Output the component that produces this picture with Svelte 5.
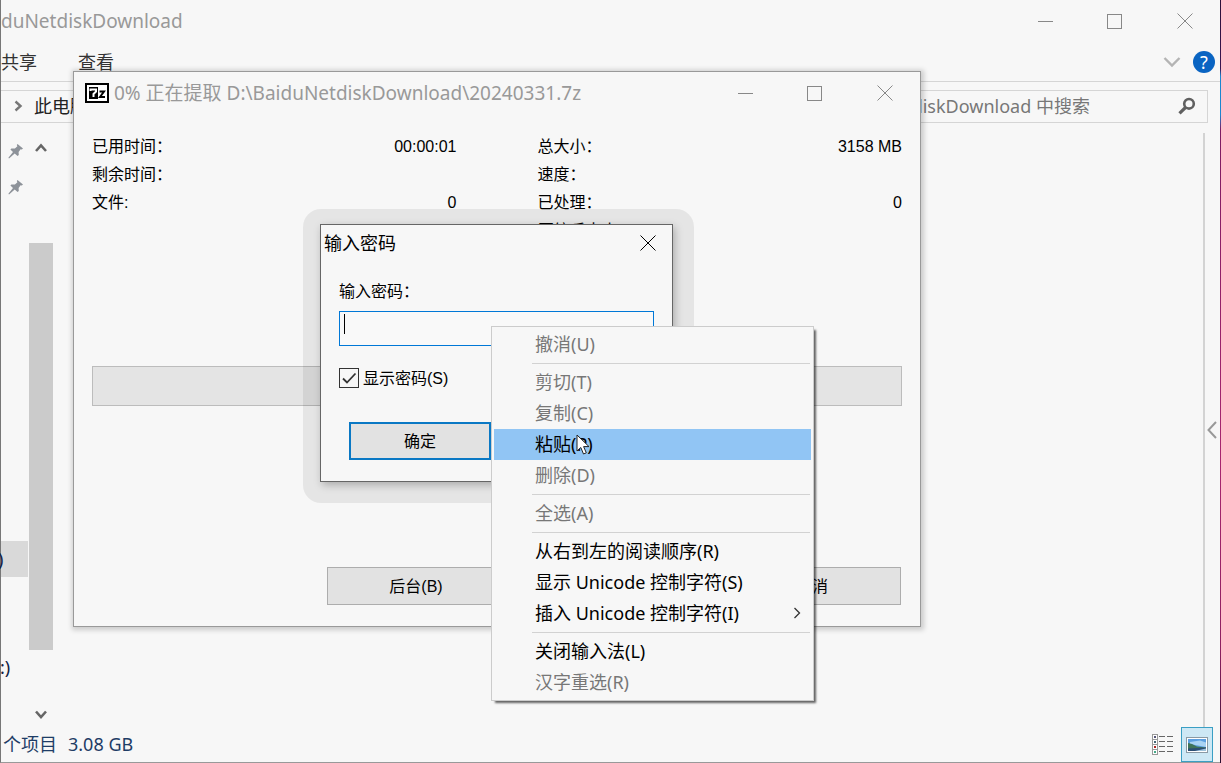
<script lang="ts">
  type MenuItem = { label: string; enabled?: boolean; submenu?: boolean; active?: boolean };

  const menuGroups: MenuItem[][] = [
    [{ label: '撤消(U)' }],
    [
      { label: '剪切(T)' },
      { label: '复制(C)' },
      { label: '粘贴(P)', enabled: true, active: true },
      { label: '删除(D)' },
    ],
    [{ label: '全选(A)' }],
    [
      { label: '从右到左的阅读顺序(R)', enabled: true },
      { label: '显示 Unicode 控制字符(S)', enabled: true },
      { label: '插入 Unicode 控制字符(I)', enabled: true, submenu: true },
    ],
    [{ label: '关闭输入法(L)', enabled: true }, { label: '汉字重选(R)' }],
  ];

  const leftStats = [
    { label: '已用时间：', value: '00:00:01' },
    { label: '剩余时间：', value: '' },
    { label: '文件:', value: '0' },
  ];

  const rightStats = [
    { label: '总大小：', value: '3158 MB' },
    { label: '速度：', value: '' },
    { label: '已处理：', value: '0' },
    { label: '压缩后大小：', value: '' },
  ];

  let password = $state('');
  let showPassword = $state(true);
</script>

{#snippet closeIcon()}
  <svg width="16" height="16" viewBox="0 0 16 16">
    <path d="M0.5 0.5 15.5 15.5M15.5 0.5 0.5 15.5" fill="none" stroke="currentColor" />
  </svg>
{/snippet}

{#snippet windowControls()}
  <div class="controls">
    <button aria-label="最小化">
      <svg width="16" height="16" viewBox="0 0 16 16"><path d="M1 8.5H16" stroke="currentColor" /></svg>
    </button>
    <button aria-label="最大化">
      <svg width="16" height="16" viewBox="0 0 16 16">
        <rect x="0.5" y="1.5" width="14" height="14" fill="none" stroke="currentColor" />
      </svg>
    </button>
    <button aria-label="关闭">{@render closeIcon()}</button>
  </div>
{/snippet}

{#snippet pin()}
  <svg width="16" height="16" viewBox="0 0 16 16">
    <path d="M9.5 1 15 5.5 13.8 6.6 12.6 6.3 10.6 8.9 10.8 12 9.6 13 6.7 10.4 1 15.4 0.4 14.8 5 8.9 2.4 6.6 3.4 5.4 6.9 5.4 9.4 3.2 8.8 2Z" fill="#8d9299" />
  </svg>
{/snippet}

<div class="desktop">
  <main class="explorer">
    <header class="title-bar">
      <span class="title">duNetdiskDownload</span>
      {@render windowControls()}
    </header>

    <nav class="ribbon">
      <button>共享</button>
      <button>查看</button>
      <span class="spacer"></span>
      <button class="expand" aria-label="展开功能区">
        <svg width="18" height="12" viewBox="0 0 18 12">
          <path d="M1.5 2 9 9.5 16.5 2" fill="none" stroke="#b4b4b4" stroke-width="2.4" />
        </svg>
      </button>
      <button class="help" aria-label="帮助">?</button>
    </nav>

    <div class="address-row">
      <div class="address">
        <svg width="9" height="12" viewBox="0 0 9 12">
          <path d="M1.5 1.5 6.5 6 1.5 10.5" fill="none" stroke="#777" stroke-width="2.4" />
        </svg>
        <span>此电脑</span>
      </div>
      <div class="search">
        <input type="text" placeholder="在 BaiduNetdiskDownload 中搜索" aria-label="搜索" />
        <svg width="18" height="18" viewBox="0 0 18 18">
          <circle cx="11" cy="6.8" r="4.8" fill="none" stroke="#606060" stroke-width="2.6" />
          <path d="M7.5 10.5 1.5 16.3" stroke="#606060" stroke-width="3.2" />
        </svg>
      </div>
    </div>

    <div class="content">
      <div class="tree">
        <div class="tree-row pinned">{@render pin()}</div>
        <div class="tree-row pinned">{@render pin()}</div>
        <span class="spacer"></span>
        <div class="tree-row selected">)</div>
        <div class="tree-row drive">:)</div>
      </div>
      <div class="scrollbar">
        <svg width="14" height="10" viewBox="0 0 14 10">
          <path d="M2 8 7 2.5 12 8" fill="none" stroke="#666" stroke-width="2.6" />
        </svg>
        <div class="thumb"></div>
        <svg width="14" height="10" viewBox="0 0 14 10">
          <path d="M2 1.5 7 7 12 1.5" fill="none" stroke="#666" stroke-width="2.6" />
        </svg>
      </div>
      <div class="files"></div>
      <button class="pane-toggle" aria-label="预览窗格">
        <svg width="10" height="18" viewBox="0 0 10 18">
          <path d="M9 1 1.5 9 9 17" fill="none" stroke="#999" stroke-width="2" />
        </svg>
      </button>
    </div>

    <footer class="status">
      <span>个项目</span>
      <span>3.08 GB</span>
      <span class="spacer"></span>
      <button aria-label="详细信息">
        <svg width="22" height="22" viewBox="0 0 22 22">
          <g fill="#fff" stroke="#999">
            <rect x="0.5" y="0.5" width="5" height="5" />
            <rect x="0.5" y="5.5" width="5" height="5" />
            <rect x="0.5" y="10.5" width="5" height="5" />
            <rect x="0.5" y="15.5" width="5" height="5" />
          </g>
          <rect x="2" y="2" width="2" height="2" fill="#557" />
          <rect x="2" y="7" width="2" height="2" fill="#467" />
          <rect x="2" y="12" width="2" height="2" fill="#a22" />
          <rect x="2" y="17" width="2" height="2" fill="#4a8" />
          <path d="M7 2.5h6M15 2.5h6M7 7.5h6M15 7.5h6M7 12.5h6M15 12.5h6M7 17.5h6M15 17.5h6" stroke="#666" />
        </svg>
      </button>
      <button class="current" aria-label="大缩略图">
        <svg width="22" height="16" viewBox="0 0 22 16">
          <rect x="0.5" y="0.5" width="21" height="15" fill="#fff" stroke="#8a9aa5" />
          <rect x="2" y="2" width="18" height="12" fill="#5b9fe0" />
          <path d="M4 5 14 3.5 20 5.5V10L4 7Z" fill="#a9d3f3" />
          <path d="M2 6 6 7 11 9.5 20 10.5V12H2Z" fill="#3f7358" />
          <path d="M2 11.5 20 10.5V14H2Z" fill="#2c4f74" />
          <path d="M9 14 20 11.5V14Z" fill="#9fc3dc" />
        </svg>
      </button>
    </footer>
  </main>

  <section class="progress-window">
    <header class="title-bar">
      <svg class="app-icon" width="24" height="20" viewBox="0 0 24 20">
        <rect x="1" y="1" width="22" height="18" fill="#fff" stroke="#000" stroke-width="2" />
        <rect x="4" y="4" width="9" height="12" fill="#000" />
        <path d="M5.5 8V6.5H11V8.5L8.5 11V14" fill="none" stroke="#fff" stroke-width="2" />
        <path d="M14.5 8.5H19L15 14H20" fill="none" stroke="#000" stroke-width="2" />
      </svg>
      <span class="title">0% 正在提取 D:\BaiduNetdiskDownload\20240331.7z</span>
      {@render windowControls()}
    </header>

    <div class="progress-body">
      <div class="stats">
        {#each [leftStats, rightStats] as column}
          <dl>
            {#each column as stat}
              <div class="stat">
                <dt>{stat.label}</dt>
                <dd>{stat.value}</dd>
              </div>
            {/each}
          </dl>
        {/each}
      </div>

      <div class="bar" role="progressbar" aria-label="进度" aria-valuenow="0"></div>

      <div class="actions">
        <button>后台(B)</button>
        <button aria-label="暂停"></button>
        <button>取消</button>
      </div>
    </div>
  </section>

  <!-- the outer element is the wide soft halo around the active dialog -->
  <div class="halo">
    <section class="password-window">
      <header>
        <span>输入密码</span>
        <button aria-label="关闭">{@render closeIcon()}</button>
      </header>
      <form>
        <label for="password">输入密码：</label>
        <div class="field">
          <input id="password" type="text" bind:value={password} />
          <span class="caret"></span>
        </div>
        <label class="check">
          <input type="checkbox" bind:checked={showPassword} />
          <span>显示密码(S)</span>
        </label>
        <div class="buttons">
          <button type="button" class="default">确定</button>
          <button type="button" aria-label="取消"></button>
        </div>
      </form>
    </section>
  </div>

  <div class="menu" role="menu">
    {#each menuGroups as group, i}
      {#if i > 0}
        <hr />
      {/if}
      {#each group as item}
        <button role="menuitem" class:active={item.active} disabled={!item.enabled}>
          <span>{item.label}</span>
          {#if item.submenu}
            <svg width="8" height="12" viewBox="0 0 8 12">
              <path d="M1.5 1 6.5 6 1.5 11" fill="none" stroke="#333" stroke-width="1.3" />
            </svg>
          {/if}
          {#if item.active}
            <svg class="pointer" width="15" height="22" viewBox="0 0 15 22">
              <path d="M1 1V17L4.8 13.5 7.5 20 10.3 18.8 7.6 12.6H13Z" fill="#fff" stroke="#222" />
            </svg>
          {/if}
        </button>
      {/each}
    {/each}
  </div>
</div>

<style>
  :global(body) {
    margin: 0;
    overflow: hidden;
  }

  .desktop {
    position: relative;
    height: 100vh;
    box-sizing: border-box;
    padding-right: 1px;
    background: linear-gradient(#2b1038, #3a1450 9%, #1c86cf 10%, #1c86cf 15%, #7d1c62 17%, #a8256f 60%, #8d2060 85%, #2b1030);
    font-family: 'Noto Sans', 'Noto Sans CJK SC', sans-serif;
    font-size: 18px;
    line-height: 24px;
    color: #222;
  }

  .desktop * {
    box-sizing: border-box;
  }

  button {
    margin: 0;
    padding: 0;
    border: 0;
    background: none;
    font: inherit;
    color: inherit;
  }

  svg {
    display: block;
    flex: none;
  }

  .spacer {
    flex: 1;
  }

  .explorer {
    display: flex;
    flex-direction: column;
    height: 100%;
    background: #f7f7f7;
    border-left: 1px solid #777;
    border-bottom: 1px solid #999;
  }

  .title-bar {
    display: flex;
    align-items: center;
    height: 44px;
    padding-bottom: 2px;
    color: #999;
  }

  .title {
    flex: 1;
    font-size: 19px;
    white-space: nowrap;
  }

  .controls {
    display: flex;
    height: 100%;
  }

  .controls button {
    display: flex;
    align-items: center;
    justify-content: center;
    width: 70px;
    color: #888;
  }

  .ribbon {
    display: flex;
    align-items: center;
    height: 38px;
    padding: 0 5px 2px 0;
    border-bottom: 1px solid #d5d5d5;
  }

  .ribbon button {
    margin-right: 41px;
    color: #333;
  }

  .ribbon .expand {
    margin-right: 12px;
  }

  .ribbon .help {
    width: 22px;
    height: 22px;
    margin: 0;
    border-radius: 50%;
    background: #0a64c2;
    color: #fff;
    line-height: 22px;
  }

  .address-row {
    display: flex;
    justify-content: space-between;
    margin: 8px 12px 0 0;
  }

  .address,
  .search {
    display: flex;
    align-items: center;
    height: 33px;
    padding-bottom: 2px;
    border: 1px solid #d5d5d5;
  }

  .address {
    flex: 1;
    gap: 11px;
    margin-right: 12px;
    padding-left: 13px;
    border-left: 0;
  }

  .search {
    width: 430px;
    padding-left: 10px;
    padding-right: 11px;
  }

  .search input {
    flex: 1;
    min-width: 0;
    padding: 0 0 0 21px;
    border: 0;
    outline: 0;
    background: none;
    font: inherit;
  }

  .search input::placeholder {
    color: #777;
    opacity: 1;
  }

  .content {
    display: flex;
    flex: 1;
    min-height: 0;
  }

  .tree {
    display: flex;
    flex-direction: column;
    width: 27px;
    padding: 10px 0 42px;
  }

  .tree-row {
    display: flex;
    align-items: center;
    height: 36px;
    color: #124;
  }

  .pinned {
    padding-left: 7px;
  }

  .selected {
    margin-bottom: 72px;
    background: #d9d9d9;
    text-indent: -3px;
  }

  .drive {
    text-indent: -1px;
  }

  .scrollbar {
    display: flex;
    flex-direction: column;
    align-items: center;
    gap: 60px;
    width: 24px;
    margin-left: 1px;
    padding: 20px 0 7px;
  }

  .thumb {
    flex: 1;
    width: 100%;
    margin-top: 30px;
    background: #cbcbcb;
  }

  .files {
    flex: 1;
    margin-top: 10px;
    border-right: 2px solid #d3d3d3;
  }

  .pane-toggle {
    width: 15px;
    padding: 10px 0 0 2px;
  }

  .status {
    display: flex;
    align-items: center;
    height: 35px;
    padding: 0 7px 0 2px;
    color: #1e3d66;
  }

  .status span {
    padding-bottom: 2px;
  }

  .status span + span {
    margin-left: 11px;
  }

  .status button {
    display: flex;
    align-items: center;
    justify-content: center;
    width: 32px;
    height: 100%;
  }

  .status .current {
    margin-left: 2px;
    border: 1px solid #3a9fc4;
    background: #cde8f5;
  }

  .progress-window {
    position: absolute;
    top: 71px;
    left: 73px;
    width: 848px;
    border: 1px solid #999;
    background: #f7f7f7;
    box-shadow: 1px 1px 5px 2px rgba(0, 0, 0, 0.18);
  }

  .app-icon {
    margin: 0 5px 0 11px;
  }

  .progress-body {
    padding: 17px 18px 21px;
    font-family: 'Liberation Sans', 'Noto Sans CJK SC', sans-serif;
    font-size: 16px;
    color: #000;
  }

  .stats {
    display: grid;
    grid-template-columns: 1fr 1fr;
    gap: 81px;
  }

  dl,
  dd {
    margin: 0;
  }

  .stat {
    display: flex;
    justify-content: space-between;
    height: 28px;
    line-height: 28px;
  }

  .bar {
    height: 40px;
    margin-top: 121px;
    border: 1px solid #bcbcbc;
    background: #e4e4e4;
  }

  .actions {
    display: flex;
    justify-content: flex-end;
    gap: 20px;
    margin: 161px 1px 0 0;
  }

  .actions button {
    width: 178px;
    height: 38px;
    padding-top: 2px;
    border: 1px solid #adadad;
    background: #e2e2e2;
  }

  .halo {
    position: absolute;
    top: 209px;
    left: 303px;
    width: 391px;
    padding: 15px 21px 21px 17px;
    border-radius: 18px;
    background: rgba(0, 0, 0, 0.07);
  }

  .password-window {
    border: 1px solid #666;
    background: #f7f7f7;
    color: #000;
    box-shadow: 2px 3px 8px rgba(0, 0, 0, 0.25);
  }

  .password-window header {
    display: flex;
    align-items: center;
    justify-content: space-between;
    height: 36px;
    padding: 0 16px 1px 3px;
  }

  form {
    display: flex;
    flex-direction: column;
    padding: 19px 18px 21px;
    font-family: 'Liberation Sans', 'Noto Sans CJK SC', sans-serif;
    font-size: 16px;
  }

  .field {
    position: relative;
    height: 35px;
    margin-top: 7px;
    border: 1px solid #0078d7;
    background: #f9f9f9;
  }

  .field input {
    display: block;
    width: 100%;
    height: 100%;
    padding: 0 4px;
    border: 0;
    outline: 0;
    background: none;
    font: inherit;
  }

  .caret {
    position: absolute;
    top: 2px;
    left: 4px;
    width: 1px;
    height: 20px;
    background: #000;
  }

  .check {
    display: flex;
    align-items: center;
    gap: 4px;
    margin-top: 20px;
  }

  .check span {
    padding-top: 2px;
    line-height: 22px;
  }

  .check input {
    appearance: none;
    width: 20px;
    height: 20px;
    margin: 0;
    border: 1px solid #333;
  }

  .check input:checked {
    background: url("data:image/svg+xml,%3Csvg xmlns='http://www.w3.org/2000/svg' viewBox='0 0 18 18'%3E%3Cpath d='M3 9.5l4 4 8.5-9' fill='none' stroke='%23333' stroke-width='1.8'/%3E%3C/svg%3E");
  }

  .buttons {
    display: flex;
    gap: 11px;
    margin: 32px 0 0 10px;
  }

  .buttons button {
    width: 142px;
    height: 38px;
    padding-top: 2px;
    border: 1px solid #adadad;
    background: #e2e2e2;
  }

  .buttons .default {
    border: 2px solid #0a78c4;
  }

  .menu {
    position: absolute;
    top: 326px;
    left: 491px;
    display: flex;
    flex-direction: column;
    width: 323px;
    padding: 2px;
    border: 1px solid #ccc;
    background: #f7f7f7;
    box-shadow: 3px 3px 2px -1px rgba(0, 0, 0, 0.6);
  }

  .menu button {
    position: relative;
    display: flex;
    align-items: center;
    justify-content: space-between;
    height: 31px;
    padding: 0 10px 2px 41px;
    color: #000;
  }

  .menu button:disabled {
    color: #777;
  }

  .menu .active {
    background: #91c5f4;
  }

  .menu hr {
    width: 278px;
    margin: 3px 0 3px 38px;
    border: 0;
    border-top: 1px solid #d2d2d2;
  }

  .pointer {
    position: absolute;
    top: 5px;
    left: 82px;
  }
</style>
